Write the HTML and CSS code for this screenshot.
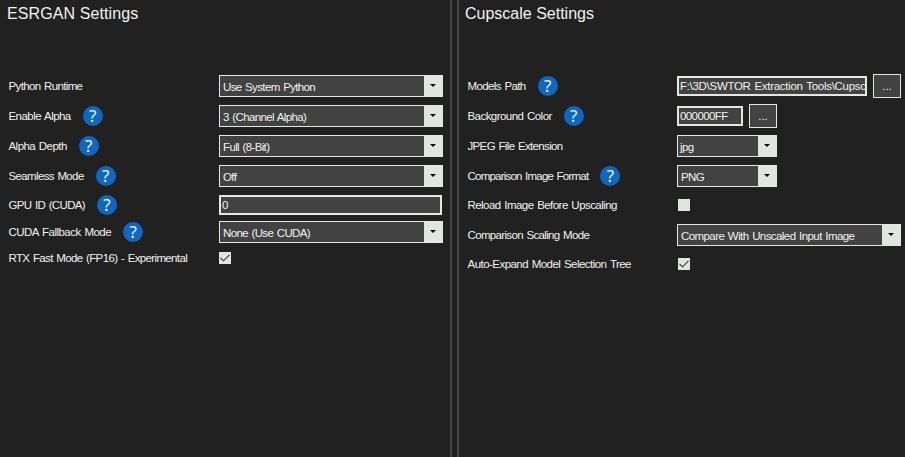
FILE: index.html
```html
<!DOCTYPE html>
<html lang="en">
<head>
<meta charset="utf-8">
<title>Settings</title>
<link rel="stylesheet" href="styles.css">
</head>
<body>
<main class="settings">
  <section class="panel esrgan">
    <h1 class="t-esrgan">ESRGAN Settings</h1>
    <div class="row"><label class="l1">Python Runtime</label><div class="combo">Use System Python<i></i></div></div>
    <div class="row"><label class="l2">Enable Alpha</label><b class="help">?</b><div class="combo">3 (Channel Alpha)<i></i></div></div>
    <div class="row"><label class="l3">Alpha Depth</label><b class="help">?</b><div class="combo">Full (8-Bit)<i></i></div></div>
    <div class="row short"><label class="l4">Seamless Mode</label><b class="help">?</b><div class="combo">Off<i></i></div></div>
    <div class="row short"><label class="l5">GPU ID (CUDA)</label><b class="help">?</b><div class="field">0</div></div>
    <div class="row tight"><label class="l6">CUDA Fallback Mode</label><b class="help">?</b><div class="combo">None (Use CUDA)<i></i></div></div>
    <div class="row tight"><label class="l7">RTX Fast Mode (FP16) - Experimental</label><div class="check"><svg viewBox="0 0 12 12"><path d="M1.5 5.8 4.5 8.8 10.5 2.8"/></svg></div></div>
  </section>
  <div class="splitter"></div>
  <section class="panel cupscale">
    <h1>Cupscale Settings</h1>
    <div class="row"><label class="r1">Models Path</label><b class="help">?</b><div class="field path">F:\3D\SWTOR Extraction Tools\Cupsc</div><div class="browse">...</div></div>
    <div class="row"><label class="r2">Background Color</label><b class="help">?</b><div class="field color">000000FF</div><div class="browse">...</div></div>
    <div class="row"><label class="r3">JPEG File Extension</label><div class="combo small jpg">jpg<i></i></div></div>
    <div class="row short"><label class="r4">Comparison Image Format</label><b class="help">?</b><div class="combo small">PNG<i></i></div></div>
    <div class="row short"><label class="r5">Reload Image Before Upscaling</label><div class="check"></div></div>
    <div class="row tall"><label class="r6">Comparison Scaling Mode</label><div class="combo compare">Compare With Unscaled Input Image<i></i></div></div>
    <div class="row tight"><label class="r7">Auto-Expand Model Selection Tree</label><div class="check"><svg viewBox="0 0 12 12"><path d="M1.5 5.8 4.5 8.8 10.5 2.8"/></svg></div></div>
  </section>
</main>
</body>
</html>
```
FILE: styles.css
```css
* { box-sizing: border-box; }
body {
  margin: 0;
  background: #212121;
  color: #f2f2f0;
  font: 11.5px/16px "Liberation Sans", Arial, sans-serif;
  letter-spacing: -0.64px;
  word-spacing: 1px;
  white-space: nowrap;
  overflow: hidden;
}
.settings { display: flex; height: 457px; }
.panel { padding-top: 3px; }
.esrgan { width: 450px; padding-left: 8px; }
.cupscale { width: 446px; padding-left: 8px; }
.splitter {
  width: 9px;
  border: solid #474747;
  border-width: 0 2px;
  background: #1f1f1f;
}
h1 {
  height: 67px;
  margin: 0 0 0 -2px;
  font-size: 16px;
  line-height: 22px;
  font-weight: normal;
  letter-spacing: 0;
  word-spacing: 0;
}
.t-esrgan { letter-spacing: 0.1px; margin-left: -1px; }
.row { display: flex; align-items: center; height: 30px; }
h1 + .row { height: 31px; padding-top: 1px; }
.row.short { height: 29px; }
.row.tight { height: 26px; }
.row.tall { height: 32px; }
.row > label { flex: none; padding-left: 0.5px; }
.l1, .l4 { letter-spacing: -0.64px; }
.l2, .l3, .r2, .r5 { letter-spacing: -0.55px; }
.r1 { letter-spacing: -0.62px; }
.l5 { letter-spacing: -0.66px; }
.r3 { letter-spacing: -0.65px; }
.r7 { letter-spacing: -0.54px; }
.l6 { letter-spacing: -0.52px; }
.r4 { letter-spacing: -0.78px; }
.r6 { letter-spacing: -0.66px; }
.help {
  display: flex;
  align-items: center;
  justify-content: center;
  width: 20px;
  height: 20px;
  margin-left: 12px;
  border-radius: 50%;
  background: #0f67bf;
  font: 17px/20px "Noto Sans", sans-serif;
  letter-spacing: 0;
}
.combo, .field, .check, .browse {
  border: 1px solid #e4e7e2;
  background: #424242;
}
.combo, .field, .check { margin-left: auto; }
.combo {
  position: relative;
  width: 224px;
  height: 22px;
  padding: 3px 0 0 3px;
}
.compare { letter-spacing: -0.58px; }
.esrgan .combo { margin-right: 7px; }
.cupscale .combo { margin-right: 4px; }
.cupscale .small { width: 100px; margin-right: 128px; }
.cupscale .jpg { padding-left: 2px; }
.combo i {
  position: absolute;
  top: 0;
  right: 0;
  bottom: 0;
  width: 18px;
  background: #e1e5df;
}
.combo i::after {
  content: "";
  position: absolute;
  left: 6px;
  top: 8px;
  border: solid transparent;
  border-width: 3px 3px 0;
  border-top-color: #000;
}
.field {
  width: 223px;
  height: 20px;
  margin-right: 8px;
  padding: 0 0 0 1px;
  border-width: 2px;
  overflow: hidden;
}
.path { width: 190px; margin-right: 6px; letter-spacing: -0.3px; }
.color { width: 66px; margin-right: 6px; letter-spacing: -0.6px; }
.browse {
  width: 28px;
  height: 24px;
  margin-right: 4px;
  text-align: center;
  line-height: 23px;
  letter-spacing: 0;
}
.color + .browse { margin-right: 128px; }
.check {
  width: 12px;
  height: 12px;
  margin-right: 219px;
  background: #e1e5df;
  border: 0;
}
.cupscale .check { margin-right: 215px; }
.check svg { display: block; width: 12px; height: 12px; }
.check path { fill: none; stroke: #333; stroke-width: 1.1; }
```
